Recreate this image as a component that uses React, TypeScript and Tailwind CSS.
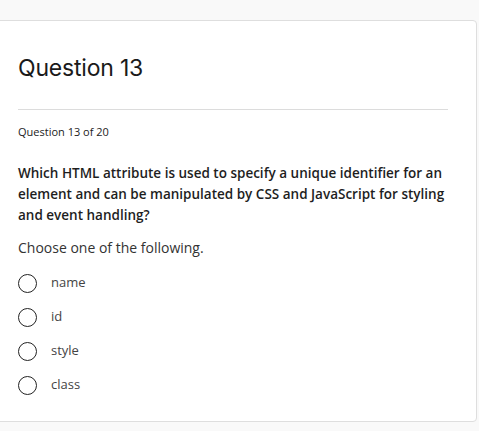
const options = ["name", "id", "style", "class"];

export default function App() {
  return (
    <div className="min-h-[431px] w-[479px] overflow-hidden bg-[#f9f9f9] pt-5">
      <div
        className="-ml-1 mr-[2px] h-[402px] rounded-[4px] border border-[#dedede] bg-white pl-[21px] pr-7 pt-[31px]"
        style={{ fontFamily: '"Open Sans", sans-serif' }}
      >
        <h1
          className="text-[23px] leading-8 tracking-[-0.2px] text-[#1a1a1a]"
          style={{ fontFamily: 'Inter, sans-serif' }}
        >
          Question 13
        </h1>
        <div className="mt-[25px] h-px bg-[#dcdcdc]" />
        <p className="mt-[14px] text-[11px] font-medium leading-4 text-[#222]">Question 13 of 20</p>
        <p className="mt-[23px] text-[13.5px] font-semibold leading-[21px] text-[#1e1e1e]">
          Which HTML attribute is used to specify a unique identifier for an element and can be manipulated
          by CSS and JavaScript for styling and event handling?
        </p>
        <p className="mt-[12px] text-[14px] leading-5 text-[#333]">Choose one of the following.</p>
        <div className="mt-[15px] flex flex-col gap-[14px]">
          {options.map((o) => (
            <label key={o} className="flex h-5 items-center gap-[14px]">
              <span className="h-[19px] w-[19px] rounded-full border-[1.5px] border-[#222]" />
              <span className="text-[13px] text-[#444]">{o}</span>
            </label>
          ))}
        </div>
      </div>
    </div>
  );
}
